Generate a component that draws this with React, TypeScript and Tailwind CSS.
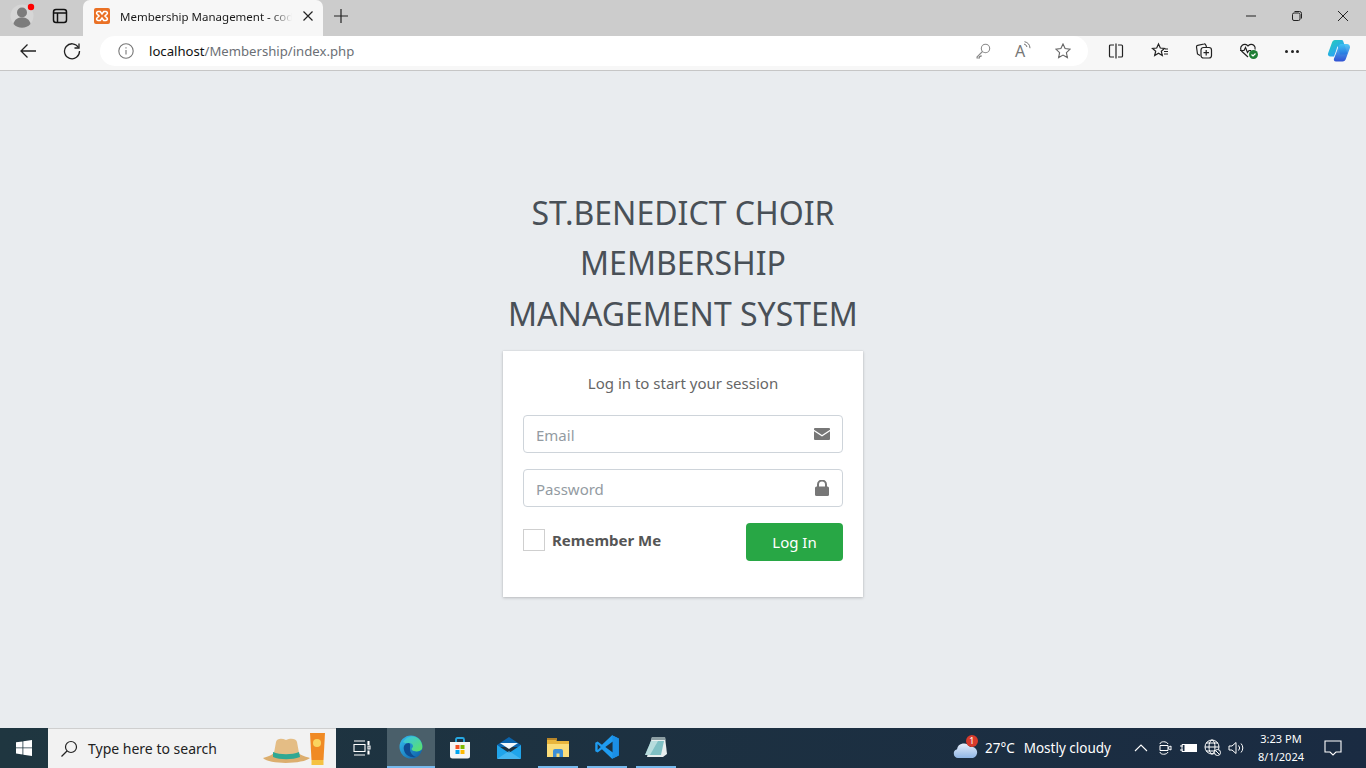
import React from "react";

const Sf = "'Noto Sans','Open Sans',sans-serif";

function TopBar() {
  return (
    <div className="h-[36px] bg-[#cccccc] flex items-stretch shrink-0">
      <div className="w-[83px] flex items-center shrink-0 pb-[4px]">
        <svg width="28" height="28" viewBox="0 0 28 28" className="ml-[8px]">
          <circle cx="14" cy="14" r="11.500" fill="#d6d6d6" />
          <circle cx="14" cy="10.500" r="5" fill="#7c7c7c" />
          <path d="M5.500 22c1-5 4.500-6.500 8.500-6.500s7.500 1.500 8.500 6.500a11.500 11.500 0 0 1-17 0z" fill="#7c7c7c" />
          <circle cx="23" cy="5" r="3.200" fill="#f00" />
        </svg>
        <svg width="16" height="16" viewBox="0 0 16 16" className="ml-[16px]" fill="none" stroke="#111" strokeWidth="1.500">
          <rect x="1.500" y="1.500" width="13" height="13" rx="2.500" />
          <path d="M2 5h12M5.500 5v9" />
        </svg>
      </div>
      <div className="w-[240px] h-[36px] bg-[#f7f7f7] rounded-t-[7px] flex items-center shrink-0 pb-[4px]">
        <svg width="16" height="16" viewBox="0 0 16 16" className="ml-[11px]">
          <rect width="16" height="16" rx="2" fill="#ea7125" />
          <path d="M4 3.500h2.200L8 6l1.800-2.500H12a1.500 1.500 0 0 1 1 2.500L11 8l2 2a1.500 1.500 0 0 1-1 2.500H9.800L8 10l-1.800 2.500H4a1.500 1.500 0 0 1-1-2.500l2-2-2-2a1.500 1.500 0 0 1 1-2.500z" fill="none" stroke="#fff" strokeWidth="1.600" />
        </svg>
        <span className="ml-[10px] pt-[1px] text-[11.500px] text-[#1a1a1a] whitespace-nowrap overflow-hidden w-[172px] [mask-image:linear-gradient(to_right,black_88%,transparent)]" style={{ fontFamily: Sf }}>Membership Management - code</span>
        <svg width="12" height="12" viewBox="0 0 12 12" className="ml-[10px]" stroke="#222" strokeWidth="1.200">
          <path d="M1.500 1.500l9 9M10.500 1.500l-9 9" />
        </svg>
      </div>
      <div className="flex items-center ml-[10px] pb-[4px]">
        <svg width="16" height="16" viewBox="0 0 16 16" stroke="#222" strokeWidth="1.200">
          <path d="M8 1v14M1 8h14" />
        </svg>
      </div>
      <div className="ml-auto flex items-center text-[#1a1a1a] pb-[4px]">
        <div className="w-[46px] flex justify-center">
          <svg width="12" height="12" viewBox="0 0 12 12" stroke="#222" strokeWidth="1"><path d="M1 6h10" /></svg>
        </div>
        <div className="w-[46px] flex justify-center">
          <svg width="12" height="12" viewBox="0 0 12 12" fill="none" stroke="#222" strokeWidth="1">
            <rect x="1.500" y="3" width="7.500" height="7.500" rx="1.500" />
            <path d="M3.500 1.500h5a2 2 0 0 1 2 2v5" />
          </svg>
        </div>
        <div className="w-[46px] flex justify-center">
          <svg width="12" height="12" viewBox="0 0 12 12" stroke="#222" strokeWidth="1"><path d="M1 1l10 10M11 1L1 11" /></svg>
        </div>
      </div>
    </div>
  );
}

function AddressBar() {
  return (
    <div className="h-[35px] bg-[#f7f7f7] border-b border-[#c6c6c6] flex items-center shrink-0 pb-[4px]">
      <svg width="18" height="18" viewBox="0 0 18 18" className="ml-[19px]" fill="none" stroke="#222" strokeWidth="1.300">
        <path d="M17 9H2M8.500 2.500L2 9l6.500 6.500" />
      </svg>
      <svg width="18" height="18" viewBox="0 0 18 18" className="ml-[26px]" fill="none" stroke="#222" strokeWidth="1.300">
        <path d="M15.500 5.500A7.500 7.500 0 1 0 16.500 9" />
        <path d="M16 1.500v4.500h-4.500" />
      </svg>
      <div className="ml-[19px] w-[988px] h-[30px] rounded-full bg-white flex items-center">
        <svg width="16" height="16" viewBox="0 0 16 16" className="ml-[18px]" fill="none" stroke="#777" strokeWidth="1.100">
          <circle cx="8" cy="8" r="7.200" />
          <path d="M8 7v4.500M8 4.200v1.300" />
        </svg>
        <span className="ml-[15px] pt-[2px] text-[13.150px] whitespace-nowrap" style={{ fontFamily: Sf }}>
          <span className="text-[#111]">localhost</span>
          <span className="text-[#6b6f75]">/Membership/index.php</span>
        </span>
        <div className="ml-auto flex items-center mr-[17px] gap-[24px]">
          <svg width="16" height="16" viewBox="0 0 16 16" fill="none" stroke="#8a8a8a" strokeWidth="1.100">
            <circle cx="10.500" cy="5.500" r="4.200" />
            <path d="M7.500 8.500L2 14v1h2.500l0-1.500H6V12" />
          </svg>
          <span className="w-[16px] h-[16px] relative text-[16px] leading-[16px] text-[#777]" style={{ fontFamily: Sf }}>
            A
            <svg width="9" height="11" viewBox="0 0 9 11" className="absolute -right-[1px] -top-[2px]" fill="none" stroke="#777" strokeWidth="1">
              <path d="M1 3a4 4 0 0 1 3 3M1.500 0.700a7 7 0 0 1 5.500 6.500" />
            </svg>
          </span>
          <svg width="16" height="16" viewBox="0 0 16 16" fill="none" stroke="#666" strokeWidth="1.100">
            <path d="M8 1l2.100 4.600 5 .6-3.700 3.400 1 5L8 12.100 3.600 14.600l1-5L.9 6.200l5-.6z" />
          </svg>
        </div>
      </div>
      <div className="flex items-center ml-[20px]">
        <svg width="16" height="16" viewBox="0 0 16 16" fill="none" stroke="#222" strokeWidth="1.200">
          <path d="M6 2H2.500a1 1 0 0 0-1 1v10a1 1 0 0 0 1 1H6M10 2h3.500a1 1 0 0 1 1 1v10a1 1 0 0 1-1 1H10M8 0.500v15" />
        </svg>
        <svg width="18" height="18" viewBox="0 0 18 18" className="ml-[27px]" fill="none" stroke="#222" strokeWidth="1.200">
          <path d="M7.500 2l1.800 4 4.200.4-3.200 2.800 1 4.300-3.800-2.300-3.800 2.300 1-4.300L1.500 6.400 5.700 6z" />
          <path d="M13 9.500h4M13 12h4M14 7h3" />
        </svg>
        <svg width="18" height="18" viewBox="0 0 18 18" className="ml-[26px]" fill="none" stroke="#222" strokeWidth="1.200">
          <path d="M5 13.500L2.500 12 1.500 5a1.500 1.500 0 0 1 1.200-1.700L9 2a1.500 1.500 0 0 1 1.800 1L11.500 5" />
          <rect x="6" y="5.500" width="10.500" height="10.500" rx="2.500" />
          <path d="M11.200 8v5.500M8.500 10.700H14" />
        </svg>
        <svg width="20" height="18" viewBox="0 0 20 18" className="ml-[26px]" fill="none" stroke="#222" strokeWidth="1.200">
          <path d="M9 15L3 9.500a4 4 0 0 1 0-6 4 4 0 0 1 6 0.500 4 4 0 0 1 6-0.500 4 4 0 0 1 1 4" />
          <path d="M1 8.500h4l1.500-3 2 5 1.500-2h2" />
          <circle cx="14.500" cy="12.500" r="4.500" fill="#1e7e34" stroke="none" />
          <path d="M12.500 12.500l1.500 1.500 2.500-2.500" stroke="#fff" />
        </svg>
        <div className="ml-[26px] flex gap-[2.500px]">
          <span className="w-[3px] h-[3px] rounded-full bg-[#222]" />
          <span className="w-[3px] h-[3px] rounded-full bg-[#222]" />
          <span className="w-[3px] h-[3px] rounded-full bg-[#222]" />
        </div>
        <svg width="24" height="24" viewBox="0 0 24 24" className="ml-[28px]">
          <defs>
            <linearGradient id="cpa" x1="0" y1="0" x2="1" y2="1">
              <stop offset="0" stopColor="#25d0b4" />
              <stop offset="0.600" stopColor="#2aa8ee" />
              <stop offset="1" stopColor="#1a73e8" />
            </linearGradient>
            <linearGradient id="cpb" x1="0" y1="0" x2="0" y2="1">
              <stop offset="0" stopColor="#3fc4f5" />
              <stop offset="1" stopColor="#1b3fd0" />
            </linearGradient>
          </defs>
          <path d="M8 1h6.500c1 0 1.500.5 1.800 1.500L20 13c.6 1.500 0 2.500-1.500 2.500H13L10.500 7 9 12l-2 5.500H3.500C1.500 17.500.5 16 1 14.500L5 3.500C5.500 2 6.500 1 8 1z" fill="url(#cpa)" />
          <path d="M16.500 5H20c1.500 0 3 1.300 3 3 0 .5 0 1-.3 1.500l-3.700 10c-.5 1.800-1.800 3-3.500 3H9c-2 0-2.500-1.500-2-3l2-5 2.500-7c.3-1 1-2 2.300-2.500z" fill="url(#cpb)" opacity=".9" />
        </svg>
      </div>
    </div>
  );
}

function Mail() {
  return (
    <svg width="16" height="12" viewBox="0 0 16 12">
      <path d="M1 0h14a1 1 0 0 1 1 1v.800L8 7 0 1.800V1a1 1 0 0 1 1-1z" fill="#777" />
      <path d="M0 3.200L8 8.400l8-5.200V11a1 1 0 0 1-1 1H1a1 1 0 0 1-1-1z" fill="#777" />
    </svg>
  );
}

function Lock() {
  return (
    <svg width="14" height="16" viewBox="0 0 14 16">
      <path d="M3 7V4.500a4 4 0 0 1 8 0V7" fill="none" stroke="#777" strokeWidth="2" />
      <rect x="0" y="6.500" width="14" height="9.500" rx="1.500" fill="#777" />
    </svg>
  );
}

function Field({ label, icon, type }: { label: string; icon: React.ReactNode; type: string }) {
  return (
    <div className="h-[38px] border border-[#ced4da] rounded-[4px] flex items-center bg-white">
      <input
        readOnly
        type={type}
        placeholder={label}
        className="flex-1 min-w-0 h-full pl-[12px] pt-[2px] text-[15px] outline-none bg-transparent placeholder:text-[#939ba2]"
        style={{ fontFamily: Sf }}
      />
      <span className="w-[40px] h-full flex items-center justify-center">{icon}</span>
    </div>
  );
}

function LoginPage() {
  return (
    <main className="flex-1 bg-[#e9ecef] flex flex-col items-center min-h-0" style={{ fontFamily: Sf }}>
      <h1 className="mt-[117px] w-[400px] text-center text-[32px] leading-[50.400px] text-[#495057]">
        ST.BENEDICT CHOIR<br />MEMBERSHIP<br />MANAGEMENT SYSTEM
      </h1>
      <div className="mt-[12px] w-[360px] h-[246px] bg-white shadow-[0_0_1px_rgba(0,0,0,0.125),0_1px_3px_rgba(0,0,0,0.2)] px-[20px] pt-[20px]">
        <p className="text-center text-[15px] leading-[24px] text-[#666]">Log in to start your session</p>
        <div className="mt-[20px]"><Field label="Email" type="email" icon={<Mail />} /></div>
        <div className="mt-[16px]"><Field label="Password" type="password" icon={<Lock />} /></div>
        <div className="mt-[16px] flex items-start justify-between">
          <label className="flex items-center h-[34px]">
            <span className="w-[22px] h-[22px] border border-[#cfcfcf] bg-white block" />
            <span className="ml-[7px] text-[15px] font-bold text-[#555]">Remember Me</span>
          </label>
          <button className="w-[97px] h-[38px] rounded-[4px] bg-[#28a745] text-white text-[15px]" style={{ fontFamily: Sf }}>Log In</button>
        </div>
      </div>
    </main>
  );
}

function Running({ children }: { children: React.ReactNode }) {
  return (
    <div className="w-[49px] flex justify-center">
      <div className="w-[40px] border-b-[2px] border-[#76b9ed] flex items-center justify-center">{children}</div>
    </div>
  );
}

function Taskbar() {
  return (
    <div className="h-[40px] bg-gradient-to-r from-[#1f3640] to-[#1a2b42] flex items-stretch shrink-0 text-white" style={{ fontFamily: Sf }}>
      <div className="w-[48px] flex items-center justify-center">
        <svg width="16" height="16" viewBox="0 0 16 16" fill="#fff">
          <path d="M0 2.300l6.500-.9v6.100H0zM7.300 1.300L16 0v7.500H7.300zM0 8.300h6.500v6.200L0 13.600zM7.300 8.300H16V16l-8.700-1.200z" />
        </svg>
      </div>
      <div className="w-[288px] bg-[#f2f2f2] border-t border-[#cfcfcf] flex items-center">
        <svg width="18" height="18" viewBox="0 0 18 18" className="ml-[12px]" fill="none" stroke="#222" strokeWidth="1.200">
          <circle cx="11" cy="7" r="5.500" />
          <path d="M7 11l-5.500 5.500" />
        </svg>
        <span className="ml-[10px] text-[14px] text-[#222]">Type here to search</span>
        <svg width="64" height="36" viewBox="0 0 64 36" className="ml-auto mr-[10px]">
          <path d="M1 27C8 25 12 23 13 20L35 20C37 24 42 25 48 27C42 33 8 34 1 27z" fill="#dcae6e" />
          <path d="M12 22L14 11C15 7 20 7 24 9C28 7 34 7 35 11L37 22C30 25 18 25 12 22z" fill="#e4bd85" />
          <path d="M11 21C18 24 30 24 37 21L38 26C30 29 18 29 11 26z" fill="#2fa893" />
          <path d="M48 2h15l-1.500 27h-12z" fill="#f08a24" />
          <rect x="49.500" y="29" width="12" height="5" fill="#f5c242" />
          <circle cx="55" cy="12" r="4" fill="#fad45f" />
        </svg>
      </div>
      <div className="w-[51px] flex items-center justify-center">
        <svg width="18" height="16" viewBox="0 0 18 16" fill="none" stroke="#fff" strokeWidth="1.100">
          <path d="M1 1h11M1 15h11M1 4.500h11v7H1zM15 1.500h1v3h-1zM15 6h2v3h-2zM15 11h1v3h-1z" />
        </svg>
      </div>
      <div className="w-[48px] bg-[#4a5f6a] border-b-[2px] border-[#76b9ed] flex items-center justify-center">
        <svg width="24" height="24" viewBox="0 0 24 24">
          <defs>
            <linearGradient id="ega" x1="0" y1="0" x2="1" y2="1">
              <stop offset="0" stopColor="#35c1f1" />
              <stop offset="1" stopColor="#0c59a4" />
            </linearGradient>
            <linearGradient id="egb" x1="0" y1="0" x2="1" y2="1">
              <stop offset="0" stopColor="#35c1f1" />
              <stop offset="1" stopColor="#5ee35f" />
            </linearGradient>
          </defs>
          <circle cx="12" cy="12" r="11.500" fill="url(#ega)" />
          <path d="M4 7C7 1 15-1 20 4c3 3 4 7 3 10-1 2-5 3-8 2-2-.5-3-2-2-3 2-1 1-5-3-5-3 0-5 0-6-1z" fill="url(#egb)" />
          <path d="M10 8c-4 0-6 3-5 7 1 5 6 8 12 7-3-1-6-4-6-8 0-3 1-5-1-6z" fill="#0f4c92" />
        </svg>
      </div>
      <div className="w-[49px] flex items-center justify-center">
        <svg width="24" height="24" viewBox="0 0 24 24">
          <path d="M8 7V3.500c0-1 .5-1.500 1.500-1.500h5c1 0 1.500.5 1.500 1.500V7" fill="none" stroke="#27a9e3" strokeWidth="1.800" />
          <path d="M2 6h20v14a2.500 2.500 0 0 1-2.500 2.500h-15A2.500 2.500 0 0 1 2 20z" fill="#f4f4f4" />
          <rect x="7.500" y="9" width="4" height="4" fill="#f25022" />
          <rect x="12.500" y="9" width="4" height="4" fill="#7fba00" />
          <rect x="7.500" y="14" width="4" height="4" fill="#00a4ef" />
          <rect x="12.500" y="14" width="4" height="4" fill="#ffb900" />
        </svg>
      </div>
      <div className="w-[49px] flex items-center justify-center">
        <svg width="26" height="24" viewBox="0 0 26 24">
          <path d="M13 1l12 8v2H1V9z" fill="#0a64ad" />
          <path d="M1 9l12 8 12-8v13a1 1 0 0 1-1 1H2a1 1 0 0 1-1-1z" fill="#20a4ea" />
          <path d="M4 7h18L13 13z" fill="#f2f8fc" />
          <path d="M1 23l12-8 12 8z" fill="#55bdf2" opacity=".7" />
        </svg>
      </div>
      <Running>
        <svg width="24" height="22" viewBox="0 0 24 22">
          <path d="M1 2h8l2 3h12v16H1z" fill="#e9b53c" />
          <rect x="1" y="2" width="10" height="2" fill="#b8862a" />
          <path d="M1 8h22v13H1z" fill="#fbdd7a" />
          <path d="M7 21v-6a2 2 0 0 1 2-2h6a2 2 0 0 1 2 2v6h-3.500v-3.500h-3V21z" fill="#3d8fd6" />
        </svg>
      </Running>
      <Running>
        <svg width="24" height="24" viewBox="0 0 100 100">
          <path fillRule="evenodd" d="M71 99L99 85V15L71 1L29 41L11 27L1 32V68L11 73L29 59zM74 27L43 50L74 73zM11 37V63L24 50z" fill="#1f9cf0" />
          <path d="M71 99L99 85V15L71 1L74 27V73z" fill="#1b8fe6" />
        </svg>
      </Running>
      <Running>
        <svg width="24" height="24" viewBox="0 0 24 24">
          <path d="M8 2h13l2 17-4 3H3z" fill="#e8eeee" />
          <path d="M8 2h13l.5 3H7z" fill="#8c9ea3" />
          <path d="M7 6h13l-3 14H1z" fill="#7fc0c4" />
          <path d="M7 6h7L6 20H1z" fill="#cfe8e8" opacity=".7" />
        </svg>
      </Running>
      <div className="flex-1 flex items-center justify-end pr-[24px] text-[13.500px]">
        <span className="relative w-[26px] h-[24px] mr-[6px]">
          <svg width="26" height="24" viewBox="0 0 26 24">
            <defs>
              <linearGradient id="cl" x1="0" y1="0" x2="0" y2="1">
                <stop offset="0" stopColor="#e6eefa" />
                <stop offset="1" stopColor="#8fb6e6" />
              </linearGradient>
            </defs>
            <path d="M5 22a4.500 4.500 0 0 1-1-8.800A7 7 0 0 1 17 11a5.500 5.500 0 0 1 3 11z" fill="url(#cl)" />
          </svg>
          <span className="absolute right-[1px] top-[-1px] w-[12px] h-[12px] rounded-full bg-[#d83b2c] text-[9px] leading-[12px] text-center">1</span>
        </span>
        <span className="mr-[9px] whitespace-nowrap">27°C</span>
        <span className="mr-[23px] whitespace-nowrap">Mostly cloudy</span>
        <svg width="14" height="8" viewBox="0 0 14 8" fill="none" stroke="#fff" strokeWidth="1.100" className="mr-[9px]">
          <path d="M1 7l6-6 6 6" />
        </svg>
        <svg width="16" height="16" viewBox="0 0 16 16" fill="none" stroke="#fff" strokeWidth="1" className="mr-[7px]">
          <path d="M3 4c0-3 7-3 8 0M3 12c0 3 7 3 8 0M3 5.500h8v5H3zM11 7.500l3-1.500v4l-3-1.500" />
        </svg>
        <svg width="18" height="14" viewBox="0 0 18 14" className="mr-[6px]">
          <rect x="5" y="3" width="12" height="8" fill="#fff" />
          <path d="M0 5h3M0 9h3M2 3.500h3v7H2z" stroke="#fff" fill="none" />
        </svg>
        <svg width="18" height="18" viewBox="0 0 18 18" fill="none" stroke="#fff" strokeWidth="1" className="mr-[6px]">
          <circle cx="8" cy="8" r="7" />
          <ellipse cx="8" cy="8" rx="3" ry="7" />
          <path d="M1 8h14M2 4h12M2 12h12" />
          <circle cx="13.500" cy="13.500" r="3" fill="#1b2d42" />
          <path d="M11.500 11.500l4 4" />
        </svg>
        <svg width="17" height="14" viewBox="0 0 17 14" fill="none" stroke="#fff" strokeWidth="1" className="mr-[11px]">
          <path d="M1 5h3l4-3.500v11L4 9H1zM10.500 4.500a3.500 3.500 0 0 1 0 5M13 2.500a6.500 6.500 0 0 1 0 9" />
        </svg>
        <div className="flex flex-col items-center text-[11px] leading-[18px] whitespace-nowrap w-[50px]">
          <span>3:23 PM</span>
          <span>8/1/2024</span>
        </div>
        <svg width="18" height="16" viewBox="0 0 18 16" fill="none" stroke="#fff" strokeWidth="1.100" className="ml-[18px]">
          <path d="M1 1h16v11h-5l-3 3-3-3H1z" />
        </svg>
      </div>
    </div>
  );
}

export default function App() {
  return (
    <div className="w-[1366px] h-[768px] flex flex-col overflow-hidden">
      <TopBar />
      <AddressBar />
      <LoginPage />
      <Taskbar />
    </div>
  );
}
